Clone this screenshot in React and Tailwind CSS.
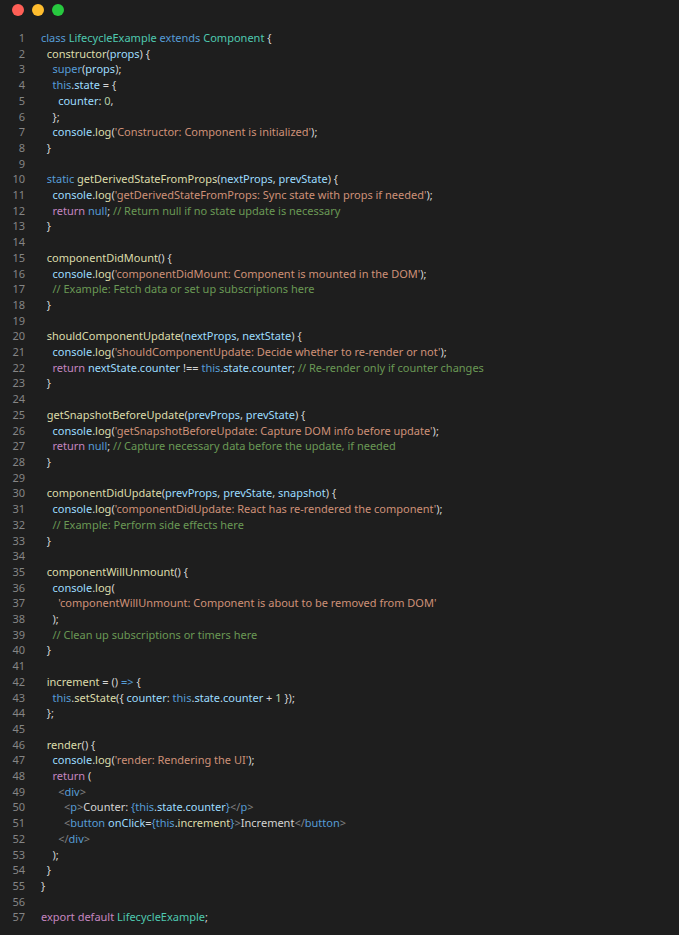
const code = `class LifecycleExample extends Component {
  constructor(props) {
    super(props);
    this.state = {
      counter: 0,
    };
    console.log('Constructor: Component is initialized');
  }

  static getDerivedStateFromProps(nextProps, prevState) {
    console.log('getDerivedStateFromProps: Sync state with props if needed');
    return null; // Return null if no state update is necessary
  }

  componentDidMount() {
    console.log('componentDidMount: Component is mounted in the DOM');
    // Example: Fetch data or set up subscriptions here
  }

  shouldComponentUpdate(nextProps, nextState) {
    console.log('shouldComponentUpdate: Decide whether to re-render or not');
    return nextState.counter !== this.state.counter; // Re-render only if counter changes
  }

  getSnapshotBeforeUpdate(prevProps, prevState) {
    console.log('getSnapshotBeforeUpdate: Capture DOM info before update');
    return null; // Capture necessary data before the update, if needed
  }

  componentDidUpdate(prevProps, prevState, snapshot) {
    console.log('componentDidUpdate: React has re-rendered the component');
    // Example: Perform side effects here
  }

  componentWillUnmount() {
    console.log(
      'componentWillUnmount: Component is about to be removed from DOM'
    );
    // Clean up subscriptions or timers here
  }

  increment = () => {
    this.setState({ counter: this.state.counter + 1 });
  };

  render() {
    console.log('render: Rendering the UI');
    return (
      @@49
      @@50
      @@51
      @@52
    );
  }
}

export default LifecycleExample;`;

const C = {
  kw: 'text-[#569cd6]',
  ctl: 'text-[#c586c0]',
  cls: 'text-[#4ec9b0]',
  fn: 'text-[#dcdcaa]',
  v: 'text-[#9cdcfe]',
  s: 'text-[#ce9178]',
  c: 'text-[#6a9955]',
  n: 'text-[#b5cea8]',
  p: 'text-[#d4d4d4]',
  g: 'text-[#808080]',
};

const jsx = {
  '@@49': [['g', '<'], ['kw', 'div'], ['g', '>']],
  '@@50': [['g', '  <'], ['kw', 'p'], ['g', '>'], ['p', 'Counter: '], ['kw', '{'], ['kw', 'this'], ['p', '.'], ['v', 'state'], ['p', '.'], ['v', 'counter'], ['kw', '}'], ['g', '</'], ['kw', 'p'], ['g', '>']],
  '@@51': [['g', '  <'], ['kw', 'button'], ['p', ' '], ['v', 'onClick'], ['p', '='], ['kw', '{'], ['kw', 'this'], ['p', '.'], ['fn', 'increment'], ['kw', '}'], ['g', '>'], ['p', 'Increment'], ['g', '</'], ['kw', 'button'], ['g', '>']],
  '@@52': [['g', '</'], ['kw', 'div'], ['g', '>']],
};

const KW = new Set(['class', 'extends', 'static', 'this', 'null', 'super']);
const CTL = new Set(['return', 'export', 'default']);
const CLS = new Set(['LifecycleExample', 'Component']);

function tokenize(line) {
  const t = line.trim();
  if (jsx[t]) {
    const indent = line.slice(0, line.indexOf('@'));
    return [['p', indent], ...jsx[t]];
  }
  const out = [];
  const re = /(\/\/.*$)|('[^']*')|(\d+)|([A-Za-z_]\w*)|(=>)|(\s+)|([^\w\s])/g;
  let m;
  while ((m = re.exec(line))) {
    if (m[1]) out.push(['c', m[1]]);
    else if (m[2]) out.push(['s', m[2]]);
    else if (m[3]) out.push(['n', m[3]]);
    else if (m[4]) {
      const w = m[4];
      const rest = line.slice(re.lastIndex);
      if (KW.has(w)) out.push(['kw', w]);
      else if (CTL.has(w)) out.push(['ctl', w]);
      else if (CLS.has(w)) out.push(['cls', w]);
      else if (/^\s*\(/.test(rest) || /^\s*=\s*\(/.test(rest)) out.push(['fn', w]);
      else out.push(['v', w]);
    } else if (m[5]) out.push(['kw', m[5]]);
    else out.push(['p', m[0]]);
  }
  return out;
}

export default function App() {
  const lines = code.split('\n');
  return (
    <div className="w-[679px] h-[935px] bg-[#1e1e1e] overflow-hidden font-['DejaVu_Sans_Mono'] text-[11px]">
      <div className="flex gap-[8px] pl-[12px] pt-[4px] h-[30px]">
        <span className="w-[12px] h-[12px] rounded-full bg-[#ff5f56]" />
        <span className="w-[12px] h-[12px] rounded-full bg-[#ffbd2e]" />
        <span className="w-[12px] h-[12px] rounded-full bg-[#27c93f]" />
      </div>
      <div className="leading-[15.7px]">
        {lines.map((l, i) => (
          <div key={i} className="flex whitespace-pre">
            <span className="w-[25px] text-right text-[#858585] shrink-0">{i + 1}</span>
            <span className="pl-[16px]">
              {tokenize(l).map(([k, s], j) => (
                <span key={j} className={C[k]}>{s}</span>
              ))}
            </span>
          </div>
        ))}
      </div>
    </div>
  );
}
